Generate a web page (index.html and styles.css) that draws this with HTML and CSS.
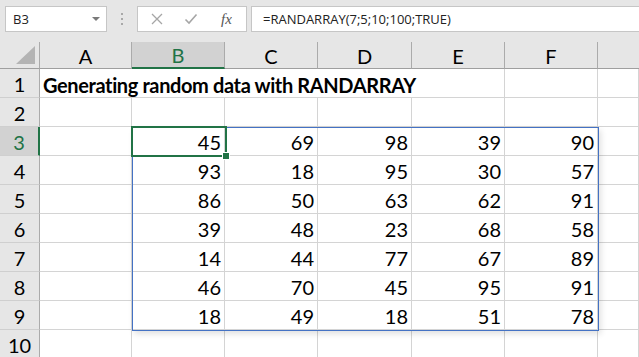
FILE: index.html
```html
<!DOCTYPE html>
<html lang="en">
<head>
    <meta charset="UTF-8">
    <meta name="viewport" content="width=device-width, initial-scale=1.0">
    <title>RANDARRAY</title>
    <link rel="stylesheet" href="styles.css">
</head>
<body>
    <div class="formula-bar">
        <div class="name-box">
            <span>B3</span>
            <span class="drop"></span>
        </div>
        <div class="grip"><i></i><i></i><i></i></div>
        <div class="fn-box">
            <svg class="ico" width="14" height="14" viewBox="0 0 14 14">
                <path d="M2 2 L12 12 M12 2 L2 12" stroke="#a6a6a6" stroke-width="1.3" fill="none"/>
            </svg>
            <svg class="ico" width="14" height="14" viewBox="0 0 14 14">
                <path d="M1.5 7.5 L5 11 L12.5 2.5" stroke="#a6a6a6" stroke-width="1.6" fill="none"/>
            </svg>
            <span class="fx">fx</span>
        </div>
        <div class="formula">=RANDARRAY(7;5;10;100;TRUE)</div>
    </div>

    <div class="sheet">
        <!-- column headers -->
        <div class="corner"><span class="tri"></span></div>
        <div class="ch">A</div>
        <div class="ch sel">B</div>
        <div class="ch">C</div>
        <div class="ch">D</div>
        <div class="ch">E</div>
        <div class="ch">F</div>
        <div class="ch last"></div>

        <div class="rh">1</div>
        <div class="cell title">Generating random data with RANDARRAY</div>
        <div class="cell"></div>
        <div class="cell"></div>

        <div class="rh">2</div>
        <div class="cell"></div><div class="cell"></div><div class="cell"></div><div class="cell"></div><div class="cell"></div><div class="cell"></div><div class="cell"></div>

        <div class="rh sel">3</div>
        <div class="cell"></div><div class="cell num">45</div><div class="cell num">69</div><div class="cell num">98</div><div class="cell num">39</div><div class="cell num">90</div><div class="cell"></div>

        <div class="rh">4</div>
        <div class="cell"></div><div class="cell num">93</div><div class="cell num">18</div><div class="cell num">95</div><div class="cell num">30</div><div class="cell num">57</div><div class="cell"></div>

        <div class="rh">5</div>
        <div class="cell"></div><div class="cell num">86</div><div class="cell num">50</div><div class="cell num">63</div><div class="cell num">62</div><div class="cell num">91</div><div class="cell"></div>

        <div class="rh">6</div>
        <div class="cell"></div><div class="cell num">39</div><div class="cell num">48</div><div class="cell num">23</div><div class="cell num">68</div><div class="cell num">58</div><div class="cell"></div>

        <div class="rh">7</div>
        <div class="cell"></div><div class="cell num">14</div><div class="cell num">44</div><div class="cell num">77</div><div class="cell num">67</div><div class="cell num">89</div><div class="cell"></div>

        <div class="rh">8</div>
        <div class="cell"></div><div class="cell num">46</div><div class="cell num">70</div><div class="cell num">45</div><div class="cell num">95</div><div class="cell num">91</div><div class="cell"></div>

        <div class="rh">9</div>
        <div class="cell"></div><div class="cell num">18</div><div class="cell num">49</div><div class="cell num">18</div><div class="cell num">51</div><div class="cell num">78</div><div class="cell"></div>

        <div class="rh">10</div>
        <div class="cell"></div><div class="cell"></div><div class="cell"></div><div class="cell"></div><div class="cell"></div><div class="cell"></div><div class="cell"></div>

        <!-- spill range and active cell -->
        <div class="spill"></div>
        <div class="active"><span class="handle"></span></div>
    </div>
</body>
</html>
```

FILE: styles.css
```css
body {
    margin: 0;
    width: 639px;
    height: 357px;
    overflow: hidden;
    background: #fff;
    font-family: Lato, "Liberation Sans", sans-serif;
}

/* formula bar */
.formula-bar {
    height: 42px;
    background: #e6e6e6;
    display: flex;
    align-items: flex-start;
    padding: 6px 0 0 5px;
    box-sizing: border-box;
    font-family: "Open Sans", "Liberation Sans", sans-serif;
    font-size: 13px;
    color: #222;
}
.name-box {
    width: 102px;
    height: 26px;
    box-sizing: border-box;
    background: #fff;
    border: 1px solid #c6c6c6;
    display: flex;
    align-items: center;
    justify-content: space-between;
    padding: 0 6px 0 7px;
}
.drop {
    width: 0;
    height: 0;
    border-left: 4px solid transparent;
    border-right: 4px solid transparent;
    border-top: 4px solid #7a7a7a;
}
.grip {
    width: 30px;
    height: 26px;
    display: flex;
    flex-direction: column;
    align-items: center;
    justify-content: center;
    gap: 3px;
}
.grip i {
    width: 2px;
    height: 2px;
    background: #a8a8a8;
}
.fn-box {
    width: 110px;
    height: 26px;
    box-sizing: border-box;
    background: #fff;
    border: 1px solid #c6c6c6;
    display: flex;
    align-items: center;
    padding-left: 12px;
    gap: 20px;
}
.fx {
    font-family: "Liberation Serif", serif;
    font-style: italic;
    font-size: 15px;
    color: #555;
    margin-left: 3px;
}
.formula {
    flex: 1;
    height: 26px;
    margin-left: 4px;
    box-sizing: border-box;
    background: #fff;
    border: 1px solid #c6c6c6;
    border-right: none;
    padding-left: 11px;
    line-height: 24px;
}

/* grid */
.sheet {
    position: relative;
    display: grid;
    grid-template-columns: 40px 92px 93px 93px 94px 93px 93px 41px;
    grid-template-rows: 27px repeat(10, 29px);
    font-size: 20px;
    color: #000;
}
.corner, .ch, .rh {
    background: #e6e6e6;
    box-sizing: border-box;
}
.corner {
    border-right: 1px solid #ababab;
    border-bottom: 1px solid #9f9f9f;
    position: relative;
}
.tri {
    position: absolute;
    right: 4px;
    bottom: 4px;
    width: 0;
    height: 0;
    border-left: 19px solid transparent;
    border-bottom: 18px solid #b4b4b4;
}
.ch {
    border-right: 1px solid #ababab;
    border-bottom: 1px solid #9f9f9f;
    display: flex;
    align-items: center;
    justify-content: center;
    padding-top: 1px;
}
.ch.last {
    border-right: none;
}
.ch.sel {
    background: #d2d2d2;
    color: #217346;
    border-bottom: 2px solid #217346;
}
.rh {
    border-right: 1px solid #ababab;
    border-bottom: 1px solid #cfcfcf;
    display: flex;
    align-items: center;
    justify-content: center;
    padding-top: 1px;
}
.rh.sel {
    background: #d2d2d2;
    color: #217346;
    border-right: 2px solid #217346;
}
.cell {
    box-sizing: border-box;
    border-right: 1px solid #d4d4d4;
    border-bottom: 1px solid #d4d4d4;
}
.title {
    grid-column: span 5;
    font-weight: bold;
    letter-spacing: -0.38px;
    white-space: nowrap;
    padding: 4px 0 0 3px;
}
.num {
    display: flex;
    align-items: flex-end;
    justify-content: flex-end;
    padding: 0 3px 3px 0;
    line-height: 20px;
}

.spill {
    position: absolute;
    left: 132px;
    top: 85px;
    width: 467px;
    height: 204px;
    box-sizing: border-box;
    border: 1px solid #4472c4;
    box-shadow: 2px 3px 6px rgba(0, 0, 0, 0.12);
}
.active {
    position: absolute;
    left: 131px;
    top: 84px;
    width: 96px;
    height: 31px;
    box-sizing: border-box;
    border: 2px solid #217346;
}
.handle {
    position: absolute;
    right: -5px;
    bottom: -5px;
    width: 6px;
    height: 6px;
    background: #217346;
    border: 1px solid #fff;
}
```
